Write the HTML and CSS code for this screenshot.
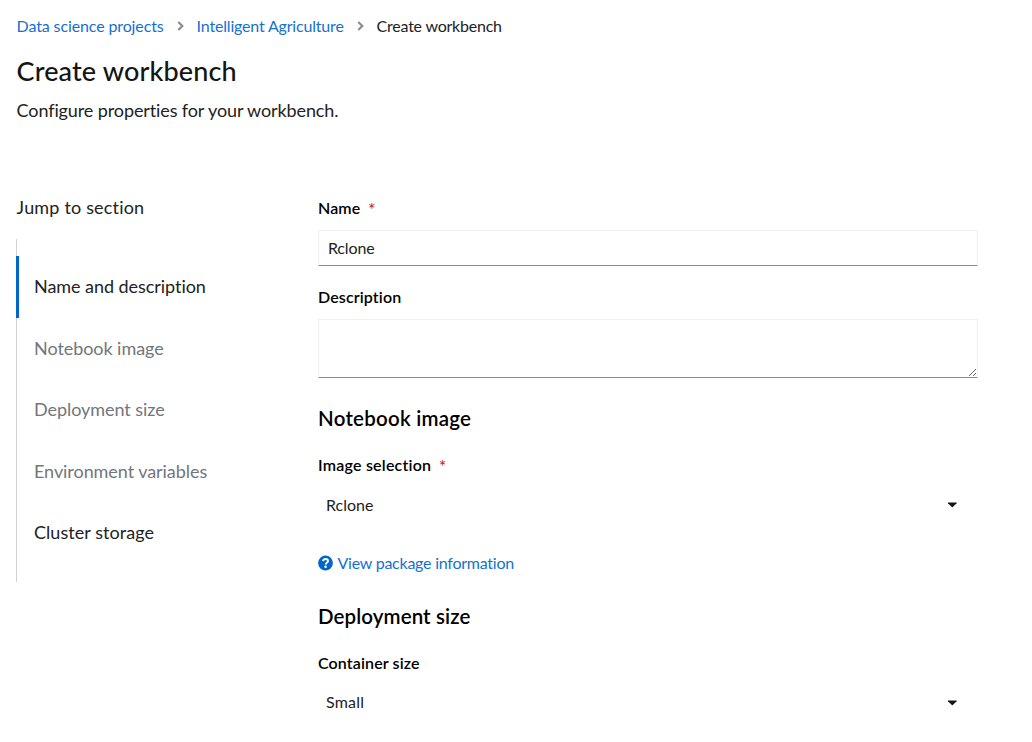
FILE: index.html
```html
<!DOCTYPE html>
<html lang="en">
<head>
<meta charset="utf-8">
<title>Create workbench</title>
<link rel="stylesheet" href="styles.css">
</head>
<body>
<header class="page-header">
  <nav class="breadcrumb">
    <a class="crumb crumb-root" href="#">Data science projects</a>
    <svg class="chevron" width="7" height="10" viewBox="0 0 7 10"><path d="M1.3 1l4 4-4 4" fill="none" stroke="#8a8d90" stroke-width="2.2"/></svg>
    <a class="crumb crumb-project" href="#">Intelligent Agriculture</a>
    <svg class="chevron" width="7" height="10" viewBox="0 0 7 10"><path d="M1.3 1l4 4-4 4" fill="none" stroke="#8a8d90" stroke-width="2.2"/></svg>
    <span class="crumb crumb-current">Create workbench</span>
  </nav>
  <h1 class="title">Create workbench</h1>
  <p class="subtitle">Configure properties for your workbench.</p>
</header>
<main class="content">
  <aside class="jump">
    <div class="jump-label">Jump to section</div>
    <ul class="jump-list">
      <li class="jump-item current">Name and description</li>
      <li class="jump-item">Notebook image</li>
      <li class="jump-item">Deployment size</li>
      <li class="jump-item">Environment variables</li>
      <li class="jump-item dark">Cluster storage</li>
    </ul>
  </aside>
  <form class="form">
    <label class="label" for="name">Name<span class="required">*</span></label>
    <input class="control" id="name" type="text" value="Rclone">
    <label class="label label-description" for="description">Description</label>
    <textarea class="control area" id="description"></textarea>
    <h2 class="section">Notebook image</h2>
    <div class="label label-image">Image selection<span class="required">*</span></div>
    <div class="toggle"><span>Rclone</span><svg width="10" height="6" viewBox="0 0 10 6"><path d="M1.2.5h8.2q.6.3.2.8L5.8 5q-.5.4-1 0L1 1.3Q.6.8 1.2.5z" fill="#151515"/></svg></div>
    <a class="package-link" href="#"><svg width="15" height="16" viewBox="0 0 15 16"><circle cx="7.5" cy="8" r="7.4" fill="#06c"/><path d="M5.1 6.2C5.3 4.7 6.2 4 7.5 4c1.4 0 2.5.8 2.5 2.1 0 1.7-2.3 1.7-2.3 3.3" fill="none" stroke="#fff" stroke-width="2"/><circle cx="7.6" cy="11.7" r="1.3" fill="#fff"/></svg><span>View package information</span></a>
    <h2 class="section section-size">Deployment size</h2>
    <div class="label label-container">Container size</div>
    <div class="toggle toggle-size"><span>Small</span><svg width="10" height="6" viewBox="0 0 10 6"><path d="M1.2.5h8.2q.6.3.2.8L5.8 5q-.5.4-1 0L1 1.3Q.6.8 1.2.5z" fill="#151515"/></svg></div>
  </form>
</main>
</body>
</html>
```
FILE: styles.css
```css
* { box-sizing: border-box; }
body { margin: 0; height: 742px; overflow: hidden; background: #fff; color: #222; font: 16px/24px Lato, "Open Sans", sans-serif; font-variant-ligatures: none; }
a { color: #1471d0; text-decoration: none; }
h1, h2, p, ul { margin: 0; padding: 0; }

.page-header { padding: 14px 16px 0 16.6px; height: 193px; }
.breadcrumb { display: flex; align-items: center; height: 24px; white-space: nowrap; }
.chevron { margin: 0 13px 0 13px; }
.crumb-root { width: 147px; letter-spacing: -.12px; }
.crumb-project { width: 147px; letter-spacing: -.18px; }
.crumb-current { letter-spacing: -.22px; }
.title { margin-top: 15px; color: #151515; font-size: 27px; line-height: 36px; font-weight: 500; letter-spacing: .13px; }
.subtitle { margin-top: 7px; font-size: 18px; line-height: 28px; letter-spacing: -.11px; }

.content { display: flex; padding-left: 16px; }
.jump { width: 302px; font-size: 18px; line-height: 28px; }
.jump-label { padding-left: .6px; letter-spacing: .18px; }
.jump-list { width: 240px; margin-top: 18px; padding: 17px 0 18.5px; list-style: none; background: linear-gradient(#d2d2d2, #d2d2d2) left / 1px 100% no-repeat; }
.jump-item { display: flex; align-items: center; height: 61.5px; padding: 0 0 1px 18px; color: #72767b; letter-spacing: -.06px; }
.jump-item.current { padding-left: 15px; border-left: 3px solid #06c; color: #222; letter-spacing: -.05px; }
.jump-item.dark { color: #222; letter-spacing: .05px; }

.form { display: flex; flex-direction: column; width: 660px; padding-top: 3px; }
.label { height: 24px; color: #000; font-weight: 600; letter-spacing: .12px; }
.required { margin-left: 7.5px; color: #c9190b; font-size: 18px; line-height: 20px; font-weight: 400; vertical-align: -2px; }
.control { display: block; width: 660px; height: 36px; margin: 10px 0 0; padding: 0 9px 2px; border: 1px solid #f0f0f0; border-bottom-color: #8a8d90; border-radius: 0; outline: 0; background: #fff; color: #222; font: inherit; letter-spacing: -.15px; }
.area { height: 59px; resize: vertical; }
.label-description { margin-top: 19px; }
.section { height: 30px; margin-top: 25px; color: #000; font-size: 20.5px; line-height: 30px; font-weight: 600; letter-spacing: .24px; }
.label-image { margin-top: 20px; letter-spacing: .22px; }
.toggle { display: flex; align-items: center; justify-content: space-between; height: 36px; margin-top: 10px; padding: 0 21px 0 8px; }
.package-link { display: flex; align-items: center; gap: 4.5px; height: 24px; margin-top: 28px; letter-spacing: -.24px; }
.section-size { margin-top: 26px; letter-spacing: .1px; }
.label-container { margin-top: 20px; }
.toggle-size { letter-spacing: .2px; }
.toggle-size span { padding-bottom: 2px; }
```
